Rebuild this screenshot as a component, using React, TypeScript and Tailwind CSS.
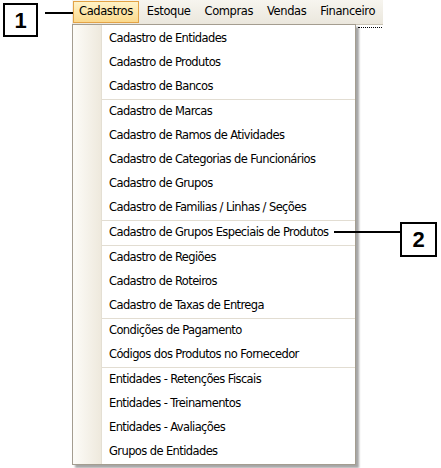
import React from 'react';

const menus = ['Cadastros', 'Estoque', 'Compras', 'Vendas', 'Financeiro'];

const groups: string[][] = [
  ['Cadastro de Entidades', 'Cadastro de Produtos', 'Cadastro de Bancos'],
  [
    'Cadastro de Marcas',
    'Cadastro de Ramos de Atividades',
    'Cadastro de Categorias de Funcionários',
    'Cadastro de Grupos',
    'Cadastro de Familias / Linhas / Seções',
  ],
  ['Cadastro de Grupos Especiais de Produtos'],
  ['Cadastro de Regiões', 'Cadastro de Roteiros', 'Cadastro de Taxas de Entrega'],
  ['Condições de Pagamento', 'Códigos dos Produtos no Fornecedor'],
  ['Entidades - Retenções Fiscais', 'Entidades - Treinamentos', 'Entidades - Avaliações', 'Grupos de Entidades'],
];

const Callout: React.FC<{ n: string; className: string }> = ({ n, className }) => (
  <div
    className={`absolute flex items-center justify-center border-2 border-black bg-white text-[22px] font-bold text-black ${className}`}
    style={{ fontFamily: '"Liberation Sans", Arial, sans-serif' }}
  >
    {n}
  </div>
);

const App: React.FC = () => {
  return (
    <div
      className="relative w-[441px] h-[468px] bg-white overflow-hidden text-[11.5px] text-black"
      style={{ fontFamily: '"DejaVu Sans", Tahoma, sans-serif' }}
    >
      <div className="pl-[72px] flex flex-col">
        {/* Menu bar */}
        <div className="w-[311px] h-[25px] flex items-center gap-[2px] pl-px bg-gradient-to-b from-[#f7f5ef] to-[#ebe7dd] border-b border-[#c9c2b3]">
          {menus.map((m, i) => (
            <div
              key={m}
              className={`h-[22px] flex items-center px-[5px] tracking-[-0.4px] ${
                i === 0 ? 'border border-[#e3a347] bg-gradient-to-b from-[#fff3c7] to-[#fbd98c]' : 'border border-transparent'
              }`}
            >
              {m}
            </div>
          ))}
        </div>

        <div className="flex">
          {/* Dropdown */}
          <div className="w-[284px] -mt-px border border-[#a49d90] bg-white shadow-[3px_3px_2px_rgba(0,0,0,0.35)] flex">
            <div className="w-[29px] bg-gradient-to-r from-[#fdfcf8] to-[#eee9dd] border-r border-[#e4dfd3]" />
            <div className="flex-1 flex flex-col pt-[2px]">
              {groups.map((g, gi) => (
                <div key={gi} className={gi > 0 ? 'border-t border-[#e2ddd2]' : ''}>
                  {g.map(item => (
                    <div key={item} className="h-[24px] flex items-center pl-[7px] tracking-[-0.6px] whitespace-nowrap">
                      {item}
                    </div>
                  ))}
                </div>
              ))}
            </div>
          </div>
          <div className="ml-[2px] w-[24px] h-[3px] mt-[2px] border-t border-dotted border-black" />
        </div>
      </div>

      {/* Callouts */}
      <Callout n="1" className="left-[3px] top-[3px] w-[35px] h-[34px]" />
      <div className="absolute left-[45px] top-[12px] w-[28px] h-[2px] bg-black" />
      <Callout n="2" className="left-[400px] top-[222px] w-[37px] h-[35px]" />
      <div className="absolute left-[334px] top-[231px] w-[66px] h-[2px] bg-black" />
    </div>
  );
};

export default App;
